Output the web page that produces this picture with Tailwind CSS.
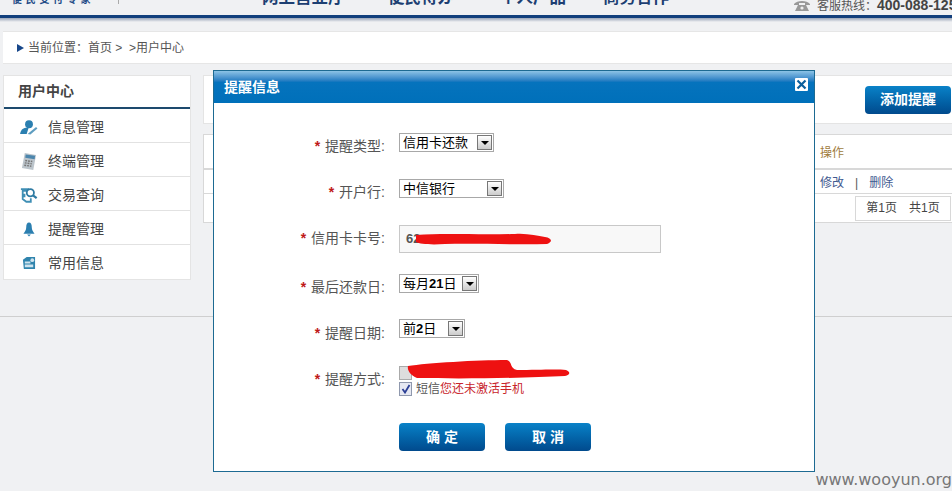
<!DOCTYPE html>
<html lang="zh-CN">
<head>
  <meta charset="UTF-8">
  <title>用户中心</title>
  <script src="https://cdn.jsdelivr.net/npm/@tailwindcss/browser@4"></script>
</head>
<body class="relative w-[952px] h-[491px] overflow-hidden bg-[#f0f1f3] text-[13px] text-[#444] font-['Liberation_Sans','Noto_Sans_CJK_SC',sans-serif]">

  <!-- top bar, cut off by the screenshot -->
  <header class="h-[15px] overflow-hidden flex items-start bg-[#f0f1f3]">
    <div class="w-[118px] shrink-0 h-[6px] pl-[12px] flex items-end text-[10px] leading-[12px] tracking-[3.7px] font-bold text-[#1d4a86] whitespace-nowrap overflow-hidden">便民支付专家</div>
    <div class="w-px h-[4px] shrink-0 bg-[#aaa]"></div>
    <nav class="flex shrink-0 pl-[143px] w-[675px] text-[16.5px] leading-[18px] font-bold text-[#1d3f72] whitespace-nowrap">
      <span class="w-[126px] h-[6px] overflow-hidden flex items-end">网上营业厅</span>
      <span class="w-[112px] h-[6px] overflow-hidden flex items-end">便民待办</span>
      <span class="w-[103px] h-[6px] overflow-hidden flex items-end">个人产品</span>
      <span class="h-[6px] overflow-hidden flex items-end">商务合作</span>
    </nav>
    <div class="flex shrink-0 items-center h-[10px] gap-[7px] text-[12px] text-[#555] whitespace-nowrap">
      <svg width="16" height="11" viewBox="0 0 16 11" class="shrink-0"><path d="M0 4C3 0 13 0 16 4V5H11V3H5V5H0ZM4 5H12L15 11H1Z" fill="#999"/><circle cx="8" cy="8" r="1.6" fill="#eee"/></svg>
      <span>客服热线：<b class="text-[14px] text-[#444]">400-088-125</b></span>
    </div>
  </header>
  <div class="h-[3px] bg-[#123f7c]"></div>
  <div class="h-[4px] bg-gradient-to-b from-[#9aa5b8] to-[#f0f1f3]"></div>

  <!-- breadcrumb -->
  <div class="ml-[3px] mt-[9px] h-[33px] bg-white border-y border-[#e6e6e6] flex items-center pl-[14px] text-[12px] text-[#555]">
    <span class="w-0 h-0 border-y-[4px] border-y-transparent border-l-[7px] border-l-[#17478a] mr-[4px]"></span>
    当前位置：首页 &gt; &nbsp;&gt;用户中心
  </div>

  <div class="flex mt-[11px] pl-[3px] gap-[12px] items-start">
    <!-- sidebar -->
    <aside class="w-[188px] h-[205px] bg-white border border-[#e4e4e4] shrink-0">
      <h3 class="h-[33px] pl-[14px] border-b-2 border-[#1d4a6e] flex items-center text-[14px] font-bold text-[#444]">用户中心</h3>
      <ul class="text-[14px] text-[#444]">
        <li class="h-[34px] pt-[3px] border-b border-[#e2e2e2] flex items-center">
          <span class="ml-[15px] w-[20px] mr-[9px] flex justify-center"><svg width="18" height="15" viewBox="0 0 19 16"><circle cx="9.500" cy="4.500" r="4.200" fill="#2b7fb0"/><path d="M0 15C1 9 5 8 9 8.500L7 15Z" fill="#2b7fb0"/><path d="M8 15L17 7.500L18.500 9L11 15.500Z" fill="#5e9dc0"/></svg></span>
          <span>信息管理</span>
        </li>
        <li class="h-[34px] pt-[3px] border-b border-[#e2e2e2] flex items-center">
          <span class="ml-[15px] w-[20px] mr-[9px] flex justify-center"><svg width="16" height="19" viewBox="0 0 17 20"><path d="M4 1L16 3L13 19L1 17Z" fill="#bcc5cc"/><path d="M5 2.500L15 4L14.500 7.500L4.500 6Z" fill="#4c86ad"/><path d="M4.500 9L12 10M4 11.500L11.500 12.500M3.500 14L11 15" stroke="#777" stroke-width="1.500" stroke-dasharray="2 1"/></svg></span>
          <span>终端管理</span>
        </li>
        <li class="h-[34px] pt-[3px] border-b border-[#e2e2e2] flex items-center">
          <span class="ml-[15px] w-[20px] mr-[9px] flex justify-center"><svg width="18" height="16" viewBox="0 0 20 17"><path d="M1 2H9V4H3V8H5V10H3V13L7 16H12V12" fill="none" stroke="#3f8fb5" stroke-width="2"/><circle cx="11.500" cy="6" r="4" fill="#fff" stroke="#2f7ba3" stroke-width="2"/><path d="M14.500 9L18.500 12" stroke="#2f7ba3" stroke-width="2.500"/></svg></span>
          <span>交易查询</span>
        </li>
        <li class="h-[34px] pt-[3px] border-b border-[#e2e2e2] flex items-center">
          <span class="ml-[15px] w-[20px] mr-[9px] flex justify-center"><svg width="12" height="15" viewBox="0 0 13 15"><path d="M6.500 0C8.500 0 9.500 2 9.500 5C9.500 8 11 10 12.500 12H.5C2 10 3.500 8 3.500 5C3.500 2 4.500 0 6.500 0Z" fill="#2b7fb0"/><path d="M4.500 13H8.500L6.500 15Z" fill="#2b7fb0"/></svg></span>
          <span>提醒管理</span>
        </li>
        <li class="h-[33px] pt-[3px] flex items-center">
          <span class="ml-[15px] w-[20px] mr-[9px] flex justify-center"><svg width="14" height="14" viewBox="0 0 15 15"><path d="M1 4L5 1H14V14H2Z" fill="#2f84ad"/><path d="M3 6H9V8H3ZM3 9H12V12H3Z" fill="#cfe3ee"/><circle cx="11" cy="4.500" r="2" fill="#cfe3ee"/></svg></span>
          <span>常用信息</span>
        </li>
      </ul>
    </aside>

    <!-- main column -->
    <main class="flex-1">
      <div class="h-[49px] bg-white border-y border-l border-[#e4e4e4] flex items-center justify-end pr-[1px]">
        <button class="w-[86px] h-[28px] rounded-[4px] bg-gradient-to-b from-[#0a82c8] to-[#014a8d] text-white text-[14px] font-bold">添加提醒</button>
      </div>
      <div class="mt-[10px] bg-white border-l border-[#d8d8d8]">
        <div class="h-[36px] pt-[3px] border-y border-[#d8d8d8] border-b-[2px] flex items-center pl-[616px] text-[#a07c3c] text-[12px]">操作</div>
        <div class="h-[24px] pt-[3px] border-b border-[#d8d8d8] flex items-center pl-[616px] text-[12px] text-[#3f5a90]">
          <span>修改</span><span class="mx-[11px] text-[#555]">|</span><span>删除</span>
        </div>
        <div class="h-[29px] border-b border-[#d8d8d8] flex items-center justify-end pr-[1px]">
          <div class="w-[96px] h-[25px] border border-[#d8d8d8] flex items-center justify-center gap-[12px] text-[12px] text-[#444]"><span>第1页</span><span>共1页</span></div>
        </div>
      </div>
    </main>
  </div>

  <!-- lower page edge -->
  <div class="absolute left-0 right-0 top-[316px] h-px bg-[#cfcfcf]"></div>

  <!-- dialog -->
  <section class="absolute left-[213px] top-[70px] w-[602px] h-[402px] bg-white border border-[#1d6a92]">
    <div class="relative h-[32px] bg-gradient-to-b from-[#8cc3e6] via-[#0573bd] via-35% to-[#0070ba] flex items-center pl-[10px] text-white font-bold text-[14px]">
      提醒信息
      <span class="absolute right-[6px] top-[7px] w-[13px] h-[13px] bg-white rounded-[1px] flex items-center justify-center">
        <svg width="11" height="11" viewBox="0 0 11 11"><path d="M1.500 1.500L9.500 9.500M9.500 1.500L1.500 9.500" stroke="#0b5f9c" stroke-width="2.200"/></svg>
      </span>
    </div>

    <form class="pt-[30px] text-[14px] leading-[20px] text-[#555]">
      <div class="h-[46px] flex items-start">
        <label class="w-[171px] pt-[3px] text-right"><i class="not-italic font-bold text-[#c01818] mr-[5px]">*</i>提醒类型:</label>
        <div class="ml-[14px] w-[95px] h-[19px] border border-[#a8a8a8] flex items-center justify-between pl-[3px] pr-[1px] text-[13px] text-black">
          信用卡还款
          <span class="w-[15px] h-[15px] bg-gradient-to-b from-[#fff] to-[#ccc] border border-[#777] flex items-center justify-center"><span class="w-0 h-0 border-x-[4px] border-x-transparent border-t-[4px] border-t-black"></span></span>
        </div>
      </div>
      <div class="h-[46px] flex items-start">
        <label class="w-[171px] pt-[3px] text-right"><i class="not-italic font-bold text-[#c01818] mr-[5px]">*</i>开户行:</label>
        <div class="ml-[14px] w-[105px] h-[19px] border border-[#a8a8a8] flex items-center justify-between pl-[3px] pr-[1px] text-[13px] text-black">
          中信银行
          <span class="w-[15px] h-[15px] bg-gradient-to-b from-[#fff] to-[#ccc] border border-[#777] flex items-center justify-center"><span class="w-0 h-0 border-x-[4px] border-x-transparent border-t-[4px] border-t-black"></span></span>
        </div>
      </div>
      <div class="h-[49px] flex items-start">
        <label class="w-[171px] pt-[3px] text-right"><i class="not-italic font-bold text-[#c01818] mr-[5px]">*</i>信用卡卡号:</label>
        <div class="relative ml-[14px] w-[262px] h-[28px] bg-[#f8f8f8] border border-[#c8c8c8] flex items-center pl-[6px] text-[13px] font-bold text-[#555]">
          62
          <svg class="absolute left-[15px] top-[7px]" width="138" height="13" viewBox="0 0 138 13"><path d="M1 2C30 0 60 2 100 1C112 0 122 3 130 4C137 5 138 9 132 11C100 12 60 10 30 11C15 12 5 11 1 9Z" fill="#ee1111"/></svg>
        </div>
      </div>
      <div class="h-[45px] flex items-start">
        <label class="w-[171px] pt-[3px] text-right"><i class="not-italic font-bold text-[#c01818] mr-[5px]">*</i>最后还款日:</label>
        <div class="ml-[14px] w-[80px] h-[19px] border border-[#a8a8a8] flex items-center justify-between pl-[3px] pr-[1px] text-[13px] text-black">
          <span>每月<b>21</b>日</span>
          <span class="w-[15px] h-[15px] bg-gradient-to-b from-[#fff] to-[#ccc] border border-[#777] flex items-center justify-center"><span class="w-0 h-0 border-x-[4px] border-x-transparent border-t-[4px] border-t-black"></span></span>
        </div>
      </div>
      <div class="h-[47px] flex items-start">
        <label class="w-[171px] pt-[4px] text-right"><i class="not-italic font-bold text-[#c01818] mr-[5px]">*</i>提醒日期:</label>
        <div class="ml-[14px] w-[66px] h-[19px] border border-[#a8a8a8] flex items-center justify-between pl-[3px] pr-[1px] text-[13px] text-black">
          <span>前<b>2</b>日</span>
          <span class="w-[15px] h-[15px] bg-gradient-to-b from-[#fff] to-[#ccc] border border-[#777] flex items-center justify-center"><span class="w-0 h-0 border-x-[4px] border-x-transparent border-t-[4px] border-t-black"></span></span>
        </div>
      </div>
      <div class="h-[57px] flex items-start">
        <label class="w-[171px] pt-[3px] text-right"><i class="not-italic font-bold text-[#c01818] mr-[5px]">*</i>提醒方式:</label>
        <div class="relative ml-[14px] text-[12px] leading-[16px]">
          <div class="h-[14px] w-[13px] bg-[#ddd] border border-[#aaa]"></div>
          <svg class="absolute left-[8px] -top-[6px]" width="164" height="19" viewBox="0 0 164 19"><path d="M1 6C20 3 70 0 100 0C106 2 102 8 110 10C130 10 150 9 159 10C164 12 163 15 158 16C120 18 60 19 10 18C3 15 0 10 1 6Z" fill="#ee1111"/></svg>
          <div class="mt-[1px] flex items-center gap-[4px]">
            <span class="w-[13px] h-[14px] bg-[#e6e8f2] border border-[#8f98ad] flex items-center justify-center"><svg width="10" height="10" viewBox="0 0 10 10"><path d="M1.500 5L4 8.500L8.500 1" fill="none" stroke="#2c3f96" stroke-width="1.800"/></svg></span>
            <span>短信<span class="text-[#c8242c]">您还未激活手机</span></span>
          </div>
        </div>
      </div>
      <div class="pl-[185px] flex gap-[20px]">
        <button type="button" class="w-[86px] h-[28px] pl-[4px] rounded-[4px] bg-gradient-to-b from-[#0a82c8] to-[#014a8d] text-white text-[14px] font-bold tracking-[4px]">确定</button>
        <button type="button" class="w-[86px] h-[28px] pl-[4px] rounded-[4px] bg-gradient-to-b from-[#0a82c8] to-[#014a8d] text-white text-[14px] font-bold tracking-[4px]">取消</button>
      </div>
    </form>
  </section>

  <!-- watermark -->
  <div class="absolute right-0 bottom-[1px] text-[16px] leading-[20px] text-[#777] font-['DejaVu_Sans',sans-serif]">www.wooyun.org</div>
</body>
</html>
